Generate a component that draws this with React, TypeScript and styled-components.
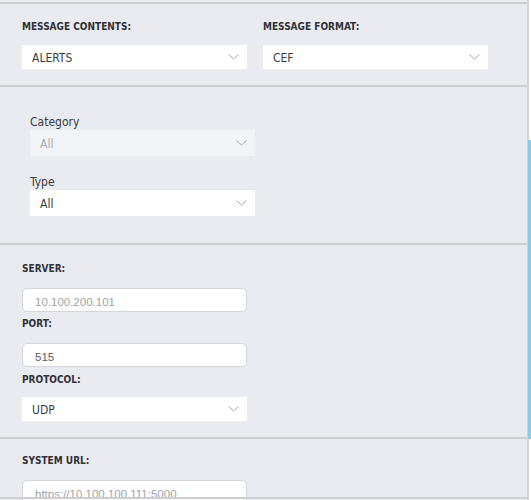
import React from "react";
import styled, { createGlobalStyle } from "styled-components";

const GlobalStyle = createGlobalStyle`
  html, body {
    margin: 0;
    padding: 0;
    background: #ffffff;
  }
  body {
    font-family: "Liberation Sans Narrow", "DejaVu Sans Condensed", "Liberation Sans", sans-serif;
  }
`;

const Chevron = () => (
  <svg width="11" height="6" viewBox="0 0 11 6" fill="none">
    <path d="M0.5 0.5 L5.5 5 L10.5 0.5" stroke="#a3a5ab" strokeWidth="1" />
  </svg>
);

const Select = ({
  value,
  width = 225,
  disabled,
  tall,
}: {
  value: string;
  width?: number;
  disabled?: boolean;
  tall?: boolean;
}) => (
  <Select.Box $width={width} $disabled={disabled} $tall={tall}>
    <span>{value}</span>
    <Chevron />
  </Select.Box>
);

Select.Box = styled.div<{ $width: number; $disabled?: boolean; $tall?: boolean }>`
  box-sizing: border-box;
  width: ${(p) => p.$width}px;
  height: ${(p) => (p.$tall ? 26 : 24)}px;
  display: flex;
  align-items: center;
  justify-content: space-between;
  padding: 0 8px 0 10px;
  background: ${(p) => (p.$disabled ? "#f3f4f7" : "#ffffff")};
  color: ${(p) => (p.$disabled ? "#a9abb0" : "#3c3c40")};
  font-size: 12px;
  span {
    padding-top: 1px;
  }
`;

// the value sits low in the box, so its bottom edge is cut like in the app
const Field = ({ value, placeholder }: { value: string; placeholder?: boolean }) => (
  <Field.Box>
    <Field.Value $placeholder={placeholder}>{value}</Field.Value>
  </Field.Box>
);

Field.Box = styled.div`
  box-sizing: border-box;
  width: 225px;
  height: 24px;
  background: #ffffff;
  border: 1px solid #d5d6da;
  border-radius: 5px;
  padding: 5px 12px 0 12px;
`;

Field.Value = styled.div<{ $placeholder?: boolean }>`
  height: 12px;
  overflow: hidden;
  line-height: 16px;
  font-family: "Liberation Sans", Arial, sans-serif;
  font-size: 11.5px;
  color: ${(p) => (p.$placeholder ? "#a2a3a8" : "#5a5b60")};
`;

const Page = styled.div`
  position: relative;
  width: 531px;
  height: 500px;
  overflow: hidden;
  background: #ffffff;
`;

const Panel = styled.div`
  box-sizing: border-box;
  width: 529px;
  height: 500px;
  background: #eaebf0;
  border-right: 2px solid #d2d3d7;
  padding-top: 2px;
  display: flex;
  flex-direction: column;
`;

const Section = styled.div<{ $pad: string }>`
  padding: ${(p) => p.$pad};
  border-top: 2px solid #cdced2;
  display: flex;
  flex-direction: column;
`;

const Row = styled.div`
  display: flex;
  gap: 16px;
`;

const Group = styled.div<{ $gap: number; $after?: number }>`
  display: flex;
  flex-direction: column;
  gap: ${(p) => p.$gap}px;
  margin-bottom: ${(p) => p.$after ?? 0}px;
`;

const Label = styled.div`
  font-size: 10px;
  line-height: 16px;
  font-weight: bold;
  color: #303136;
`;

const SubLabel = styled.div`
  font-size: 12px;
  line-height: 16px;
  color: #3a3b40;
`;

const Scrollbar = styled.div`
  position: absolute;
  right: 0;
  top: 140px;
  width: 3px;
  height: 299px;
  background: #8dcbe3;
`;

const BottomEdge = styled.div`
  position: absolute;
  left: 0;
  right: 3px;
  bottom: 1px;
  height: 2px;
  background: #cdced2;
`;

export default function App() {
  return (
    <>
      <GlobalStyle />
      <Page>
        <Panel>
          <Section $pad="15px 22px 16px">
            <Row>
              <Group $gap={10}>
                <Label>MESSAGE CONTENTS:</Label>
                <Select value="ALERTS" />
              </Group>
              <Group $gap={10}>
                <Label>MESSAGE FORMAT:</Label>
                <Select value="CEF" />
              </Group>
            </Row>
          </Section>
          <Section $pad="27px 30px 27px">
            <Group $gap={0} $after={18}>
              <SubLabel>Category</SubLabel>
              <Select value="All" disabled tall />
            </Group>
            <Group $gap={0}>
              <SubLabel>Type</SubLabel>
              <Select value="All" tall />
            </Group>
          </Section>
          <Section $pad="16px 22px 16px">
            <Group $gap={11} $after={4}>
              <Label>SERVER:</Label>
              <Field value="10.100.200.101" placeholder />
            </Group>
            <Group $gap={11} $after={5}>
              <Label>PORT:</Label>
              <Field value="515" />
            </Group>
            <Group $gap={9}>
              <Label>PROTOCOL:</Label>
              <Select value="UDP" />
            </Group>
          </Section>
          <Section $pad="14px 22px 0">
            <Group $gap={11}>
              <Label>SYSTEM URL:</Label>
              <Field value="https://10.100.100.111:5000" placeholder />
            </Group>
          </Section>
        </Panel>
        <Scrollbar />
        <BottomEdge />
      </Page>
    </>
  );
}
